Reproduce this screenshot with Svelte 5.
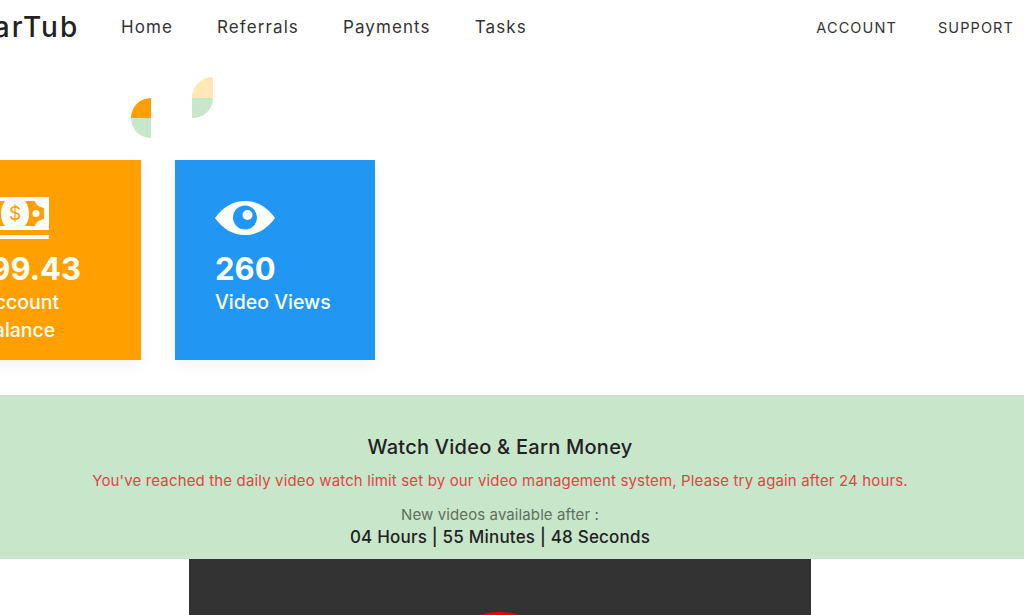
<script>
	const links = ['Home', 'Referrals', 'Payments', 'Tasks'];
	const side = ['Account', 'Support'];
</script>

<div class="page">
	<header class="topbar">
		<div class="brand">StarTub</div>
		<nav class="mainnav">
			{#each links as l}
				<span>{l}</span>
			{/each}
		</nav>
		<nav class="sidenav">
			{#each side as s}
				<span>{s}</span>
			{/each}
		</nav>
	</header>

	<div class="leaves">
		<div class="leaf first">
			<i class="orange"></i>
			<i class="green"></i>
		</div>
		<div class="leaf second">
			<i class="pale"></i>
			<i class="green"></i>
		</div>
	</div>

	<section class="cards">
		<div class="card money">
			<svg class="money-icon" viewBox="0 0 68 42" width="68" height="42" aria-hidden="true">
				<rect width="68" height="33" fill="#fff" />
				<path fill="#ff9f00" d="M44 4H54C55 8 58 10 63 11V22C58 23 55 25 54 29H44C47 25 48 21 48 16.500C48 12 47 8 44 4Z" />
				<path fill="#ff9f00" d="M24 4H14C13 8 10 10 5 11V22C10 23 13 25 14 29H24C21 25 20 21 20 16.500C20 12 21 8 24 4Z" />
				<circle cx="55" cy="16.500" r="3.500" fill="#fff" />
				<circle cx="13" cy="16.500" r="3.500" fill="#fff" />
				<text x="34" y="23" text-anchor="middle" class="dollar">$</text>
				<rect y="38" width="68" height="4" fill="#fff" />
			</svg>
			<div class="num">199.43</div>
			<div class="label">Account<br />Balance</div>
		</div>
		<div class="card views">
			<svg class="eye-icon" viewBox="0 0 60 34" width="60" height="34" aria-hidden="true">
				<path fill="#fff" d="M0 17C8 6 18 0 30 0s22 6 30 17c-8 11-18 17-30 17S8 28 0 17z" />
				<circle cx="30" cy="16.500" r="12" fill="#2196f3" />
				<circle cx="32.500" cy="14" r="5" fill="#fff" />
			</svg>
			<div class="num">260</div>
			<div class="label">Video Views</div>
		</div>
	</section>

	<section class="band">
		<h2>Watch Video &amp; Earn Money</h2>
		<p class="limit">You've reached the daily video watch limit set by our video management system, Please try again after 24 hours.</p>
		<p class="after">New videos available after :</p>
		<p class="timer">04 Hours | 55 Minutes | 48 Seconds</p>
	</section>

	<div class="video">
		<div class="play"></div>
	</div>
</div>

<style>
	:global(body) {
		margin: 0;
		background: #fff;
		overflow: hidden;
	}
	.page {
		width: 1024px;
		height: 615px;
		overflow: hidden;
		font-family: Inter, "Open Sans", sans-serif;
		color: #333;
	}
	.topbar {
		display: flex;
		align-items: center;
		height: 54px;
		margin-left: -38px;
	}
	.brand {
		width: 117px;
		font-size: 28px;
		font-weight: 500;
		letter-spacing: 2px;
		white-space: nowrap;
		color: #222;
	}
	.mainnav {
		display: flex;
		gap: 44px;
		margin-left: 42px;
		font-size: 17px;
		letter-spacing: 1.100px;
	}
	.sidenav {
		display: flex;
		gap: 41px;
		margin-left: auto;
		margin-right: 10px;
		font-size: 14.500px;
		letter-spacing: 1.100px;
		text-transform: uppercase;
	}
	.leaves {
		display: flex;
		align-items: flex-start;
		height: 83px;
		margin-top: 23px;
		padding-left: 131px;
	}
	.leaf {
		display: flex;
		flex-direction: column;
		width: 20px;
	}
	.leaf i {
		display: block;
		height: 20px;
	}
	.leaf.first {
		margin-top: 21px;
	}
	.leaf.second {
		margin-left: 41px;
		width: 21px;
	}
	.second i {
		height: 20.500px;
	}
	.orange {
		background: #ff9f00;
		border-top-left-radius: 100%;
	}
	.pale {
		background: #ffe8b3;
		border-top-left-radius: 100%;
	}
	.green {
		background: #c8e6c9;
	}
	.first .green {
		border-bottom-left-radius: 100%;
	}
	.second .green {
		border-bottom-right-radius: 100%;
	}
	.cards {
		display: flex;
		gap: 34px;
		margin-left: -59px;
		height: 200px;
	}
	.card {
		flex: none;
		box-sizing: border-box;
		width: 200px;
		height: 200px;
		padding: 37px 40px 0;
		color: #fff;
		box-shadow: 0 4px 16px rgba(0, 0, 0, 0.06);
	}
	.money {
		background: #ff9f00;
	}
	.views {
		background: #2196f3;
		padding-top: 41px;
	}
	svg {
		display: block;
	}
	.dollar {
		font-family: Inter, sans-serif;
		font-size: 19px;
		font-weight: 400;
		fill: #ff9f00;
	}
	.num {
		font-size: 31px;
		font-weight: 700;
		line-height: 36px;
		margin-top: 12px;
		white-space: nowrap;
	}
	.money .num {
		margin-left: -4px;
	}
	.views .num {
		margin-top: 16px;
	}
	.label {
		font-size: 19.500px;
		font-weight: 500;
		line-height: 28px;
		margin-top: 1px;
	}
	.band {
		box-sizing: border-box;
		height: 164px;
		margin-top: 35px;
		padding: 39px 24px 0 0;
		background: #c8e6c9;
		text-align: center;
		color: #222;
	}
	.band h2 {
		margin: 0;
		font-size: 20px;
		line-height: 26px;
		font-weight: 500;
		letter-spacing: 0.25px;
	}
	.band p {
		margin: 0;
	}
	.limit {
		margin-top: 10px !important;
		font-size: 15px;
		line-height: 22px;
		letter-spacing: 0.15px;
		color: #e04545;
	}
	.after {
		margin-top: 12px !important;
		font-size: 15px;
		line-height: 21px;
		letter-spacing: 0.1px;
		color: #5f6f60;
	}
	.timer {
		font-size: 17px;
		font-weight: 500;
		line-height: 24px;
		letter-spacing: 0.2px;
	}
	.video {
		width: 622px;
		height: 56px;
		margin-left: 189px;
		background: #333;
		overflow: hidden;
	}
	.play {
		width: 42px;
		height: 30px;
		margin: 53px auto 0;
		background: #f00000;
		border-radius: 50% / 20%;
	}
</style>
